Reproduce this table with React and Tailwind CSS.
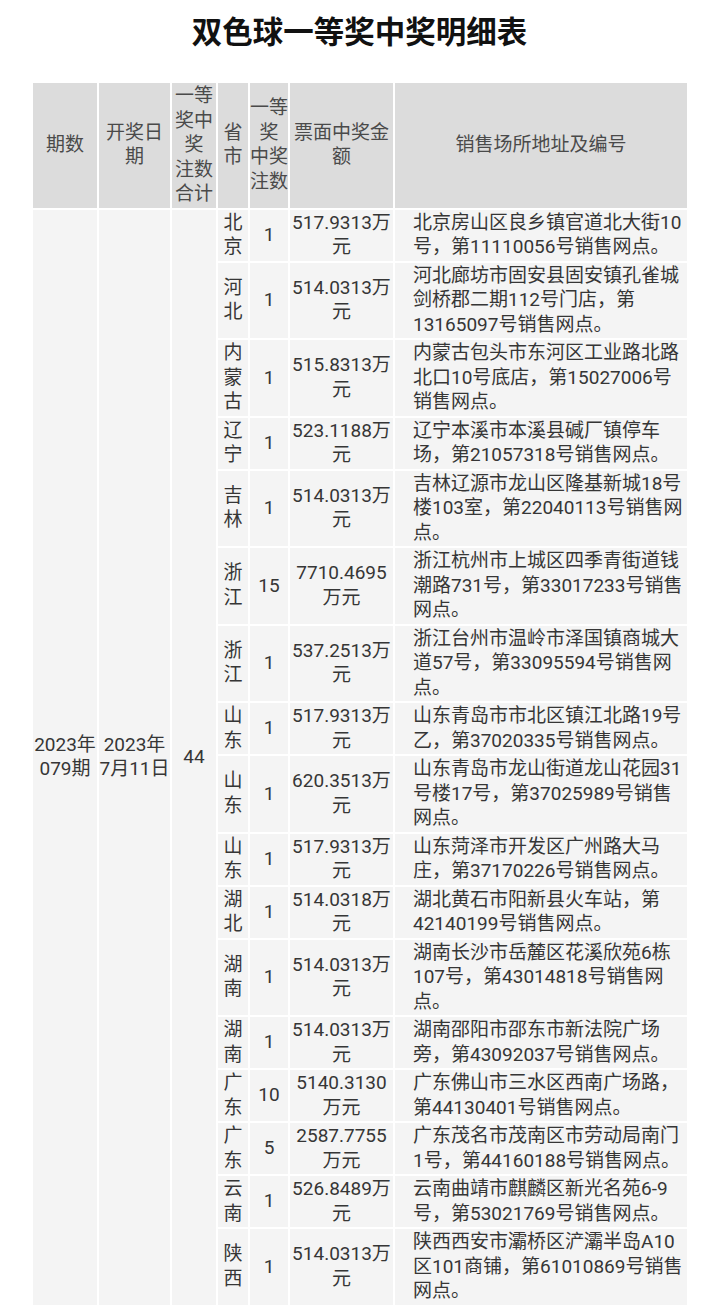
import React from 'react'

const rows = [
	{p: '北京', n: '1', amt: ['517.9313万', '元'], addr: ['北京房山区良乡镇官道北大街10', '号，第11110056号销售网点。']},
	{p: '河北', n: '1', amt: ['514.0313万', '元'], addr: ['河北廊坊市固安县固安镇孔雀城', '剑桥郡二期112号门店，第', '13165097号销售网点。']},
	{p: '内蒙古', n: '1', amt: ['515.8313万', '元'], addr: ['内蒙古包头市东河区工业路北路', '北口10号底店，第15027006号', '销售网点。']},
	{p: '辽宁', n: '1', amt: ['523.1188万', '元'], addr: ['辽宁本溪市本溪县碱厂镇停车', '场，第21057318号销售网点。']},
	{p: '吉林', n: '1', amt: ['514.0313万', '元'], addr: ['吉林辽源市龙山区隆基新城18号', '楼103室，第22040113号销售网', '点。']},
	{p: '浙江', n: '15', amt: ['7710.4695', '万元'], addr: ['浙江杭州市上城区四季青街道钱', '潮路731号，第33017233号销售', '网点。']},
	{p: '浙江', n: '1', amt: ['537.2513万', '元'], addr: ['浙江台州市温岭市泽国镇商城大', '道57号，第33095594号销售网', '点。']},
	{p: '山东', n: '1', amt: ['517.9313万', '元'], addr: ['山东青岛市市北区镇江北路19号', '乙，第37020335号销售网点。']},
	{p: '山东', n: '1', amt: ['620.3513万', '元'], addr: ['山东青岛市龙山街道龙山花园31', '号楼17号，第37025989号销售', '网点。']},
	{p: '山东', n: '1', amt: ['517.9313万', '元'], addr: ['山东菏泽市开发区广州路大马', '庄，第37170226号销售网点。']},
	{p: '湖北', n: '1', amt: ['514.0318万', '元'], addr: ['湖北黄石市阳新县火车站，第', '42140199号销售网点。']},
	{p: '湖南', n: '1', amt: ['514.0313万', '元'], addr: ['湖南长沙市岳麓区花溪欣苑6栋', '107号，第43014818号销售网', '点。']},
	{p: '湖南', n: '1', amt: ['514.0313万', '元'], addr: ['湖南邵阳市邵东市新法院广场', '旁，第43092037号销售网点。']},
	{p: '广东', n: '10', amt: ['5140.3130', '万元'], addr: ['广东佛山市三水区西南广场路，', '第44130401号销售网点。']},
	{p: '广东', n: '5', amt: ['2587.7755', '万元'], addr: ['广东茂名市茂南区市劳动局南门', '1号，第44160188号销售网点。']},
	{p: '云南', n: '1', amt: ['526.8489万', '元'], addr: ['云南曲靖市麒麟区新光名苑6-9', '号，第53021769号销售网点。']},
	{p: '陕西', n: '1', amt: ['514.0313万', '元'], addr: ['陕西西安市灞桥区浐灞半岛A10', '区101商铺，第61010869号销售', '网点。']},
]

const Lines = ({lines}) =>
	lines.map((l, i) => (
		<div key={i} className="whitespace-nowrap">
			{l}
		</div>
	))

const th = 'bg-[#dcdcdc] font-normal text-center align-middle p-0 py-[1px]'
const td = 'bg-[#f4f4f4] text-center align-middle p-0 py-[1px]'

export default function App() {
	return (
		<div className="bg-white min-h-[1313px] font-['Roboto','Noto_Sans_CJK_SC',sans-serif] text-[#363636]">
			<h1 className="pt-[13px] mb-[28px] text-center text-[30.5px] leading-[40px] font-bold text-[#111]">
				双色球一等奖中奖明细表
			</h1>
			<table className="ml-[31px] w-[658px] table-fixed border-separate border-spacing-[2px] text-[19px] leading-[24.5px]">
				<colgroup>
					<col className="w-[64px]" />
					<col className="w-[71px]" />
					<col className="w-[44px]" />
					<col className="w-[30px]" />
					<col className="w-[38px]" />
					<col className="w-[103px]" />
					<col className="w-[292px]" />
				</colgroup>
				<thead className="text-[#4a4a4a]">
					<tr>
						<th className={th}>期数</th>
						<th className={th}>
							<Lines lines={['开奖日', '期']} />
						</th>
						<th className={th}>
							<Lines lines={['一等', '奖中', '奖', '注数', '合计']} />
						</th>
						<th className={th}>
							<Lines lines={['省', '市']} />
						</th>
						<th className={th}>
							<Lines lines={['一等', '奖', '中奖', '注数']} />
						</th>
						<th className={th}>
							<Lines lines={['票面中奖金', '额']} />
						</th>
						<th className={th}>销售场所地址及编号</th>
					</tr>
				</thead>
				<tbody>
					{rows.map((r, i) => (
						<tr key={i}>
							{i === 0 && (
								<>
									<td rowSpan={rows.length} className={td}>
										<Lines lines={['2023年', '079期']} />
									</td>
									<td rowSpan={rows.length} className={td}>
										<Lines lines={['2023年', '7月11日']} />
									</td>
									<td rowSpan={rows.length} className={td}>
										44
									</td>
								</>
							)}
							<td className={td}>
								<Lines lines={r.p.split('')} />
							</td>
							<td className={td}>{r.n}</td>
							<td className={td}>
								<Lines lines={r.amt} />
							</td>
							<td className={`${td} !text-left pl-[18px]`}>
								<Lines lines={r.addr} />
							</td>
						</tr>
					))}
				</tbody>
			</table>
		</div>
	)
}
